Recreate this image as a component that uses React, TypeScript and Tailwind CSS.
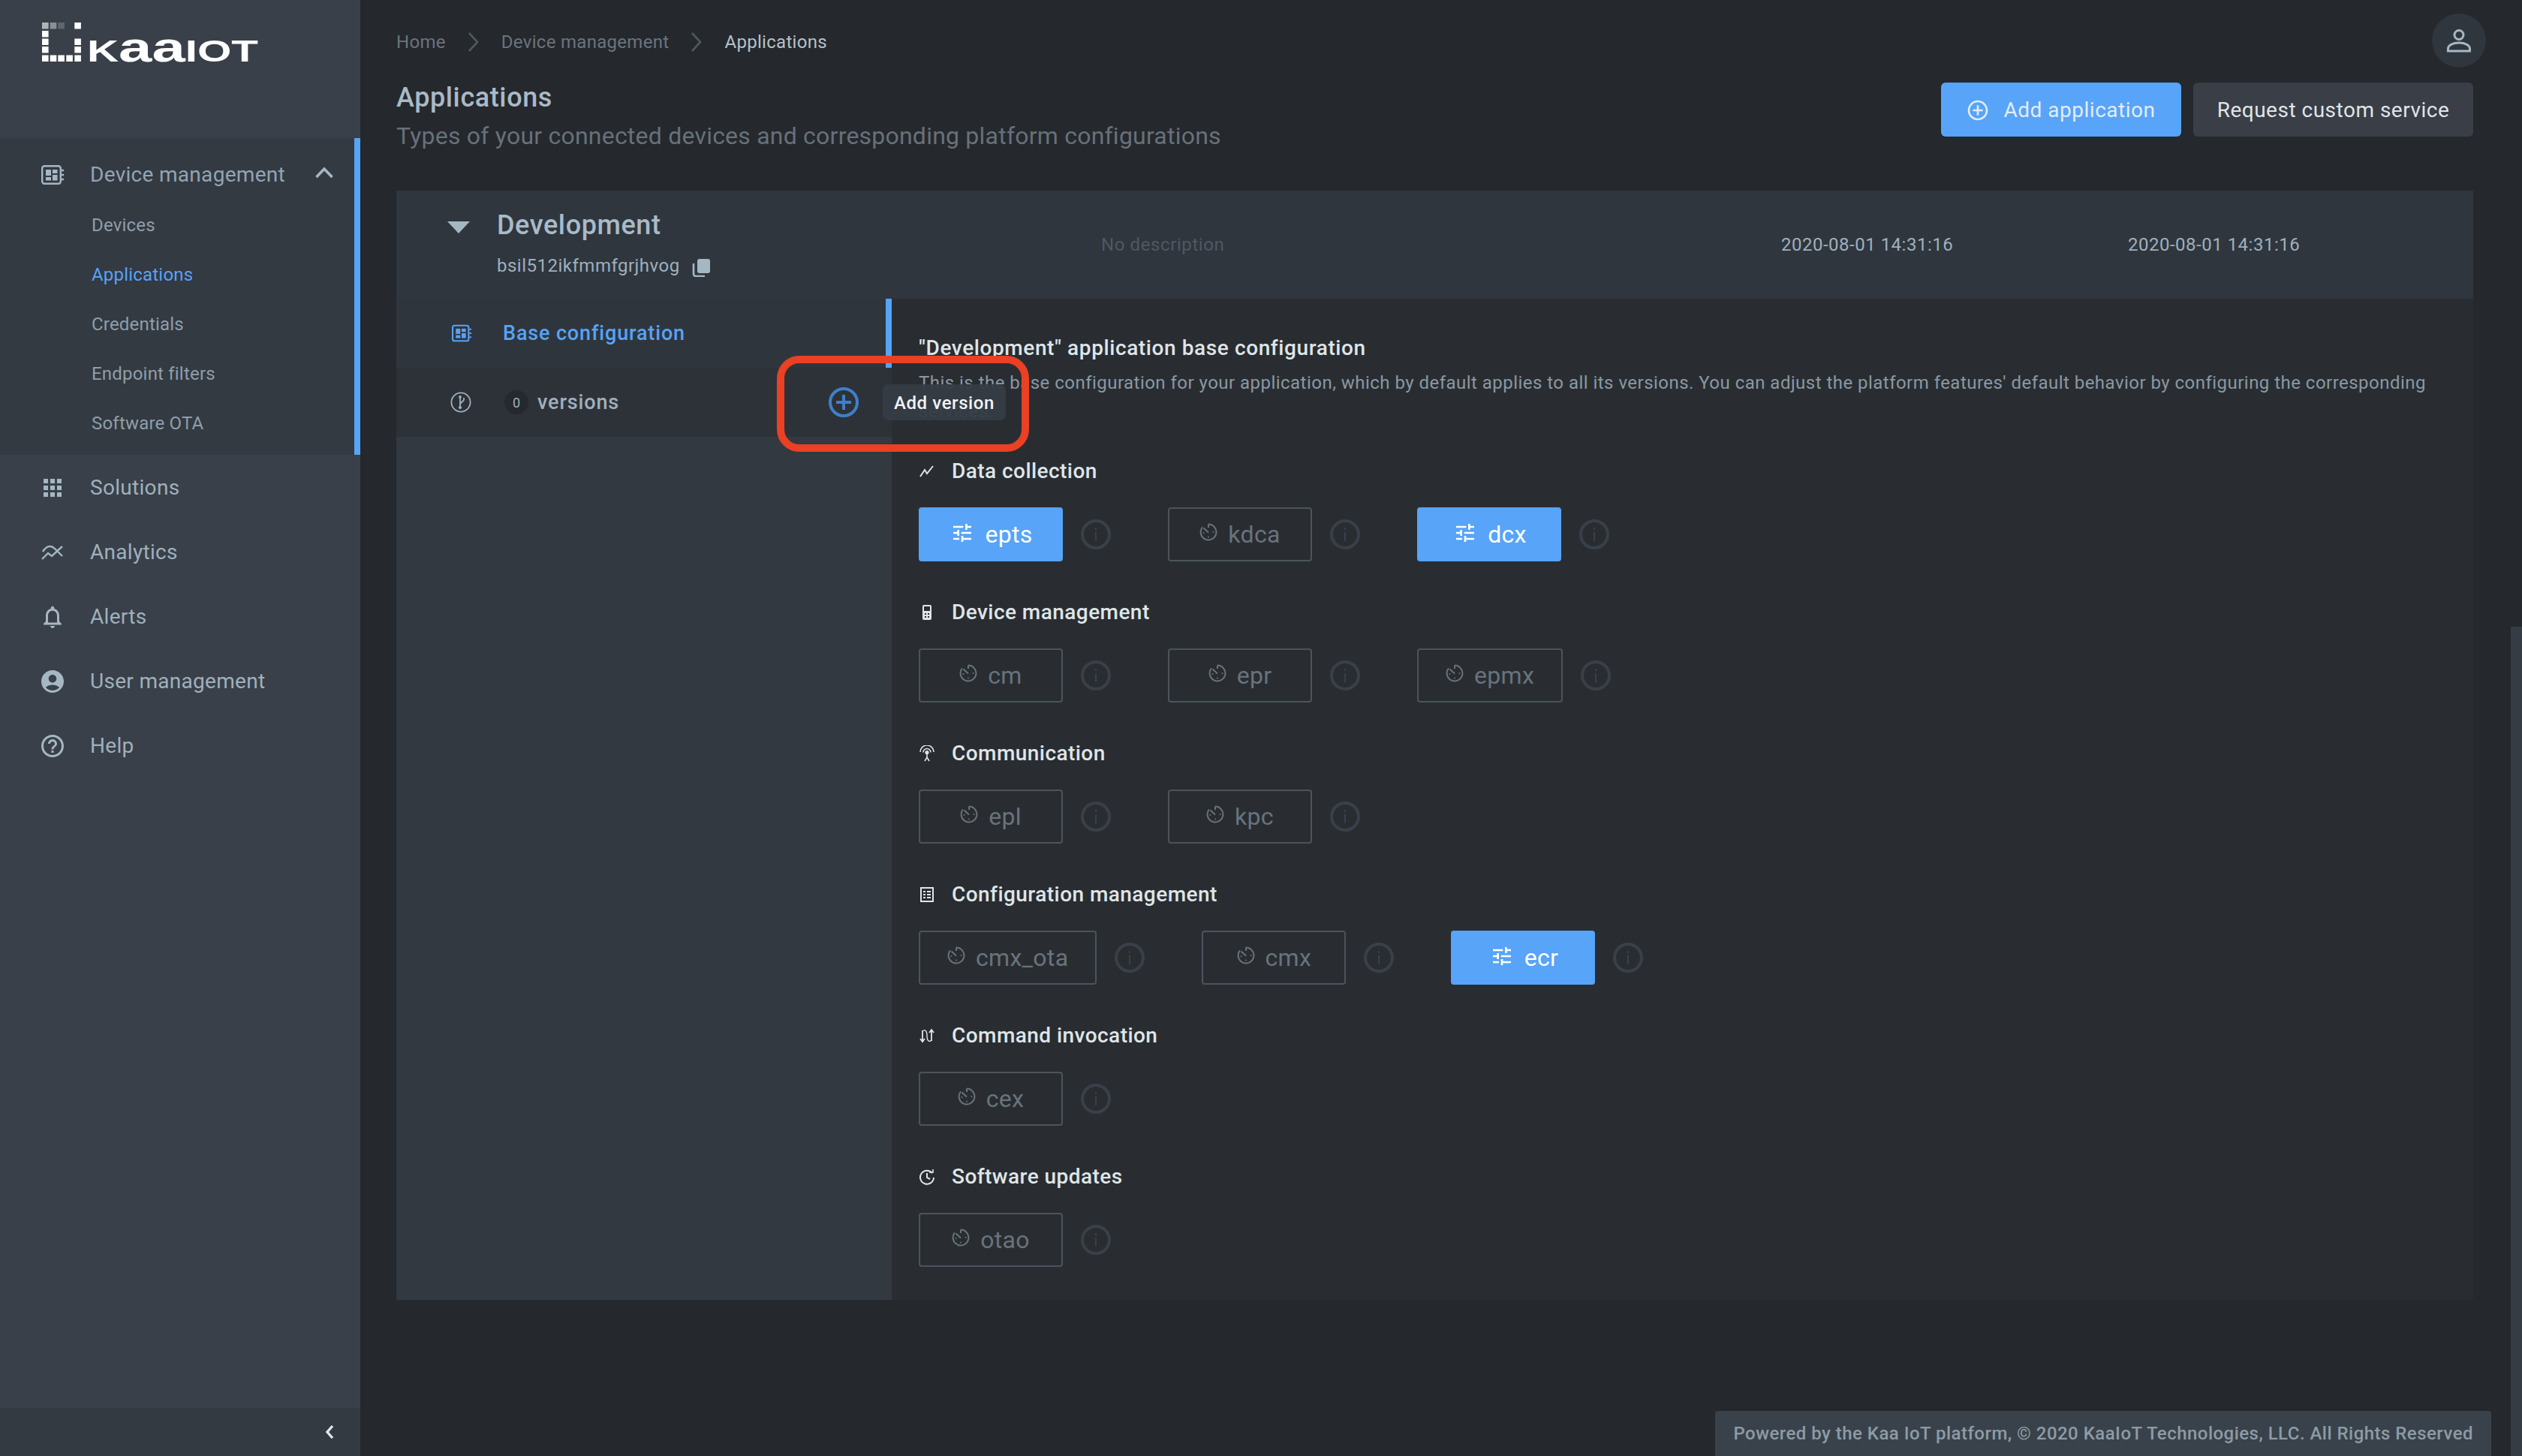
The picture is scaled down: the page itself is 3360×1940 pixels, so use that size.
import React from "react";
import { MdApps, MdNotificationsNone, MdAccountCircle, MdHelpOutline, MdTune, MdAddCircleOutline } from "react-icons/md";

const DeviceIcon = ({ w, h, c }: { w: number; h: number; c: string }) => (
  <svg width={w} height={h} viewBox="0 0 30 26" fill="none">
    <rect x="1.2" y="1.2" width="24.6" height="23.6" rx="3" stroke={c} strokeWidth="2.4" />
    <rect x="6" y="6" width="7" height="8" fill={c} />
    <rect x="15" y="6" width="6.5" height="5" fill={c} />
    <rect x="6" y="16" width="7" height="4.5" fill={c} />
    <rect x="15" y="13" width="6.5" height="7.5" fill={c} />
    <path d="M27 7h3M27 13h3M27 19h3" stroke={c} strokeWidth="2.4" />
  </svg>
);

const AnalyticsIcon = () => (
  <svg width="30" height="20" viewBox="0 0 30 20" fill="none" stroke="#a6b7c4" strokeWidth="2.4">
    <path d="M1 19 L9 11 L14 15 L28 2" />
    <path d="M2 9 C7 1 13 0 18 5 L28 15" />
  </svg>
);

const Logo = () => {
  const r = [56, 66.7, 77.3, 88.3, 99.3];
  const y = [30, 41, 51.5, 62, 73.5];
  return (
    <svg width="300" height="70" viewBox="56 30 300 70" className="ml-[56px] mt-[30px]">
      <rect x={r[0]} y={y[0]} width="8.6" height="8.5" fill="#b0b4b8" />
      <rect x={r[1]} y={y[0]} width="8.6" height="8.5" fill="#8a8f94" />
      <rect x={r[2]} y={y[0]} width="8.6" height="8.5" fill="#5f666e" />
      <rect x={r[4]} y={y[0]} width="8.6" height="8.5" fill="#fff" />
      {y.slice(1).map((v) => <rect key={v} x={r[0]} y={v} width="8.6" height="8.5" fill="#fff" />)}
      {r.slice(1).map((v) => <rect key={v} x={v} y={y[4]} width="8.6" height="8.5" fill="#fff" />)}
      {y.slice(2, 4).map((v) => <rect key={v} x={r[4]} y={v} width="8.6" height="8.5" fill="#fff" />)}
      <text x="116" y="82" fontSize="41" fontWeight="700" fill="#fff" textLength="228" lengthAdjust="spacingAndGlyphs" style={{ fontFamily: "Liberation Sans, sans-serif" }}>
        K<tspan fontSize="56">aa</tspan>IOT
      </text>
    </svg>
  );
};

const Dial = () => (
  <svg width="24" height="24" viewBox="0 0 24 24" fill="none" stroke="currentColor" strokeWidth="2" className="-mt-[6px] shrink-0">
    <path d="M12 1.6a10.4 10.4 0 1 1-8 3.8" />
    <path d="M12 1.600V6M5.500 6.500l6.500 6" />
    <circle cx="12" cy="18.500" r="1" fill="currentColor" stroke="none" />
    <circle cx="18.500" cy="12" r="1" fill="currentColor" stroke="none" />
    <circle cx="5.500" cy="13" r="1" fill="currentColor" stroke="none" />
  </svg>
);

const Info = () => (
  <svg width="40" height="40" viewBox="0 0 40 40" fill="none" className="shrink-0">
    <circle cx="20" cy="20" r="18" stroke="#394049" strokeWidth="4" />
    <rect x="19" y="17" width="2" height="12" fill="#394049" />
    <rect x="19" y="11" width="2" height="3" fill="#394049" />
  </svg>
);

type Svc = { n: string; on?: boolean };

const Service = ({ n, on }: Svc) => (
  <div className="flex items-center gap-[24px]">
    <div
      className={
        on
          ? "flex h-[72px] min-w-[192px] items-center justify-center gap-[14px] rounded-[4px] border-2 border-[#57a4f8] bg-[#57a4f8] px-[35px] text-[#ffffff]"
          : "flex h-[72px] min-w-[192px] items-center justify-center gap-[14px] rounded-[4px] border-2 border-[#4b545d] px-[36px] text-[#68737d]"
      }
    >
      {on ? <MdTune size={32} className="-mt-[4px] ml-[2px] shrink-0" /> : <Dial />}
      <span className="text-[32px] leading-[36px] tracking-[0.3px]">{n}</span>
    </div>
    <Info />
  </div>
);

const HeadIcon = ({ k }: { k: string }) => {
  const p = { width: 22, height: 22, viewBox: "0 0 22 22", fill: "none", stroke: "#dfe5e8", strokeWidth: 2 };
  if (k === "data") return <svg {...p}><path d="M2 18 L8 9 L11 14 L19 4" /></svg>;
  if (k === "dev")
    return (
      <svg {...p}>
        <rect x="5" y="1" width="12" height="20" rx="2" fill="#dfe5e8" stroke="none" />
        <rect x="7" y="3" width="8" height="6" fill="#292d31" stroke="none" />
        <path d="M8 13h2M12 13h2M8 17h2M12 17h2" stroke="#292d31" />
      </svg>
    );
  if (k === "com")
    return (
      <svg {...p} strokeWidth="1.6">
        <path d="M2 9a9 9 0 0 1 18 0M6 9.5a5 5 0 0 1 10 0" />
        <circle cx="11" cy="9.5" r="1.8" fill="#dfe5e8" />
        <path d="M11 11v5M8 21l3-5 3 5" />
      </svg>
    );
  if (k === "cfg")
    return (
      <svg {...p}>
        <rect x="3" y="2" width="16" height="18" strokeWidth="2" />
        <path d="M6 7h3M11 7h5M6 11h3M11 11h5M6 15h3M11 15h5" strokeWidth="1.8" />
      </svg>
    );
  if (k === "cmd")
    return (
      <svg {...p} strokeWidth="1.8">
        <path d="M5 4v14M2 15l3 4 3-4M17 18V4M14 7l3-4 3 4" />
        <path d="M5 5c3-3 6-1 6 6s3 9 6 6" strokeWidth="1.4" />
      </svg>
    );
  return (
    <svg {...p}>
      <path d="M18 6a9 9 0 1 0 2 6" />
      <path d="M11 6v6l4 2" />
      <path d="M14 5h5V1" strokeWidth="1.6" />
    </svg>
  );
};

const sections: { k: string; t: string; s: Svc[] }[] = [
  { k: "data", t: "Data collection", s: [{ n: "epts", on: true }, { n: "kdca" }, { n: "dcx", on: true }] },
  { k: "dev", t: "Device management", s: [{ n: "cm" }, { n: "epr" }, { n: "epmx" }] },
  { k: "com", t: "Communication", s: [{ n: "epl" }, { n: "kpc" }] },
  { k: "cfg", t: "Configuration management", s: [{ n: "cmx_ota" }, { n: "cmx" }, { n: "ecr", on: true }] },
  { k: "cmd", t: "Command invocation", s: [{ n: "cex" }] },
  { k: "upd", t: "Software updates", s: [{ n: "otao" }] },
];

const Chev = () => (
  <svg width="16" height="28" viewBox="0 0 16 28" fill="none" stroke="#4f5861" strokeWidth="2.6" className="mx-[29px]">
    <path d="M2 2l11 12L2 26" />
  </svg>
);

const navItems: [React.ReactNode, string][] = [
  [<MdApps size={36} color="#a6b7c4" />, "Solutions"],
  [<AnalyticsIcon />, "Analytics"],
  [<MdNotificationsNone size={36} color="#a6b7c4" />, "Alerts"],
  [<MdAccountCircle size={36} color="#a6b7c4" />, "User management"],
  [<MdHelpOutline size={36} color="#a6b7c4" />, "Help"],
];

export default function App() {
  return (
    <div className="relative flex h-[1940px] w-[3360px] overflow-hidden bg-[#25282c] [font-family:Roboto,sans-serif]">
      <aside className="flex h-full w-[480px] shrink-0 flex-col bg-[#394049]">
        <div className="h-[184px] shrink-0">
          <Logo />
        </div>
        <div className="h-[422px] shrink-0 border-r-[8px] border-[#56a3f7] bg-[#333a42] pt-[15px]">
          <div className="flex h-[68px] items-center pl-[55px]">
            <DeviceIcon w={30} h={26} c="#a6b7c4" />
            <span className="ml-[35px] text-[28px] tracking-[0.3px] text-[#93a4b2]">Device management</span>
            <svg width="24" height="16" viewBox="0 0 24 16" fill="none" stroke="#a6b7c4" strokeWidth="3.6" className="-mt-[6px] ml-auto mr-[28px]">
              <path d="M1.5 14L12 3l10.5 11" />
            </svg>
          </div>
          {["Devices", "Applications", "Credentials", "Endpoint filters", "Software OTA"].map((t) => (
            <div
              key={t}
              className={
                t === "Applications"
                  ? "flex h-[66px] items-center pl-[122px] text-[24px] tracking-[0.2px] text-[#56a3f7]"
                  : "flex h-[66px] items-center pl-[122px] text-[24px] tracking-[0.2px] text-[#8f9eaa]"
              }
            >
              {t}
            </div>
          ))}
        </div>
        <div className="pt-px">
          {navItems.map(([ic, t]) => (
            <div key={t} className="flex h-[86px] items-center">
              <div className="flex w-[140px] shrink-0 justify-center">{ic}</div>
              <span className="-ml-[20px] text-[28px] tracking-[0.3px] text-[#9fb0bd]">{t}</span>
            </div>
          ))}
        </div>
        <div className="mt-auto flex h-[64px] items-center justify-end bg-[#343a42] pr-[35px]">
          <svg width="12" height="20" viewBox="0 0 12 20" fill="none" stroke="#dfe7ee" strokeWidth="3.4">
            <path d="M10 2L3 10l7 8" />
          </svg>
        </div>
      </aside>

      <main className="flex h-full flex-1 flex-col pl-[48px]">
        <div className="flex h-[110px] shrink-0 items-start justify-between pr-[48px] pt-[18px]">
          <div className="flex h-[76px] items-center text-[24px] tracking-[0.3px] text-[#6a747e]">
            <span>Home</span>
            <Chev />
            <span>Device management</span>
            <Chev />
            <span className="text-[#b5c1cb]">Applications</span>
          </div>
          <div className="flex h-[72px] w-[72px] items-center justify-center rounded-full bg-[#2f363e]">
            <svg width="32" height="32" viewBox="0 0 32 32" fill="none" stroke="#a6b7c4" strokeWidth="3">
              <circle cx="16" cy="8.5" r="6" />
              <path d="M1.5 30v-3c0-5 7-8 14.500-8s14.500 3 14.500 8v3z" />
            </svg>
          </div>
        </div>

        <div className="flex h-[144px] w-[2767px] shrink-0 items-start justify-between">
          <div>
            <h1 className="text-[36px] font-medium leading-[40px] tracking-[0.6px] text-[#a9bac7]">Applications</h1>
            <p className="mt-[10px] text-[32px] leading-[42px] tracking-[0.22px] text-[#66717b]">
              Types of your connected devices and corresponding platform configurations
            </p>
          </div>
          <div className="flex gap-[16px]">
            <div className="flex h-[72px] w-[320px] items-center justify-center gap-[19px] rounded-[6px] bg-[#57a4f8] pt-[1px] text-[#e3ecf3]">
              <MdAddCircleOutline size={32} className="-ml-[2px]" />
              <span className="text-[28px] tracking-[0.5px]">Add application</span>
            </div>
            <div className="flex h-[72px] w-[373px] items-center justify-center rounded-[6px] bg-[#3a3e47] pt-[1px] text-[#dfe5e8]">
              <span className="text-[28px] tracking-[0.5px]">Request custom service</span>
            </div>
          </div>
        </div>

        <div className="flex w-[2767px] shrink-0 flex-col">
          <div className="grid h-[144px] grid-cols-[939px_906px_462px_460px] items-center bg-[#2f363e]">
            <div className="flex items-start pl-[68px]">
              <svg width="30" height="16" viewBox="0 0 30 16" className="mt-[13px]">
                <path d="M0 0h30L15 16z" fill="#a6b7c4" />
              </svg>
              <div className="-mt-[4px] ml-[36px]">
                <div className="text-[36px] font-medium leading-[44px] tracking-[0.6px] text-[#a9bac7]">Development</div>
                <div className="mt-[16px] flex items-center">
                  <span className="text-[24px] leading-[32px] tracking-[0.5px] text-[#9fb0bd]">bsil512ikfmmfgrjhvog</span>
                  <svg width="24" height="24" viewBox="0 0 24 24" className="ml-[16px] mt-[5px]">
                    <rect x="7" y="0" width="17" height="19" rx="3" fill="#a6b7c4" />
                    <path d="M2 6v14a3 3 0 0 0 3 3h12" fill="none" stroke="#a6b7c4" strokeWidth="2.6" />
                  </svg>
                </div>
              </div>
            </div>
            <div className="text-[24px] tracking-[0.6px] text-[#4f5861]">No description</div>
            <div className="text-[24px] tracking-[0.5px] text-[#9fb0bd]">2020-08-01 14:31:16</div>
            <div className="text-[24px] tracking-[0.5px] text-[#9fb0bd]">2020-08-01 14:31:16</div>
          </div>

          <div className="flex h-[1334px]">
            <div className="w-[660px] shrink-0 bg-[#323941]">
              <div className="flex h-[92px] items-center border-r-[8px] border-[#56a3f7] bg-[#2f353d] pl-[74px]">
                <DeviceIcon w={26} h={24} c="#56a3f7" />
                <span className="ml-[42px] text-[27px] font-medium tracking-[0.85px] text-[#56a3f7]">Base configuration</span>
              </div>
              <div className="flex h-[92px] items-center bg-[#2d3239] pl-[72px] pr-[44px]">
                <svg width="28" height="28" viewBox="0 0 28 28" fill="none" stroke="#9fb0bd" strokeWidth="1.8">
                  <circle cx="14" cy="14" r="12.600" />
                  <path d="M13 21V7M13 16l5-5M18 8v3" />
                  <circle cx="13" cy="21" r="1.200" fill="#9fb0bd" />
                  <circle cx="13" cy="7" r="1" fill="#9fb0bd" />
                </svg>
                <div className="ml-[44px] flex h-[32px] w-[32px] items-center justify-center rounded-full bg-[#25282c] text-[18px] text-[#9fb0bd]">0</div>
                <span className="ml-[12px] text-[27px] font-medium tracking-[0.85px] text-[#9fb0bd]">versions</span>
                <svg width="40" height="40" viewBox="0 0 40 40" fill="none" stroke="#3f80c8" strokeWidth="4" className="ml-auto">
                  <circle cx="20" cy="20" r="18" />
                  <path d="M10 20h20M20 10v20" />
                </svg>
              </div>
            </div>
            <div className="flex-1 bg-[#292d31] pl-[36px] pr-[36px] pt-[47px]">
              <div className="pt-[1px] text-[28px] font-medium leading-[36px] tracking-[0.6px] text-[#dfe5e8]">
                "Development" application base configuration
              </div>
              <p className="mt-[9px] text-[24px] leading-[38px] tracking-[0.47px] text-[#8a98a4]">
                This is the base configuration for your application, which by default applies to all its versions. You can adjust the platform features' default behavior by configuring the corresponding services.
              </p>
              <div className="mt-[41px]">
                {sections.map((s) => (
                  <section key={s.t} className="h-[188px]">
                    <div className="flex h-[40px] items-center">
                      <HeadIcon k={s.k} />
                      <span className="ml-[22px] text-[28px] font-medium tracking-[0.45px] text-[#dfe5e8]">{s.t}</span>
                    </div>
                    <div className="mt-[28px] flex gap-[76px]">
                      {s.s.map((v) => (
                        <Service key={v.n} {...v} />
                      ))}
                    </div>
                  </section>
                ))}
              </div>
            </div>
          </div>
        </div>

        <div className="mr-[41px] mt-auto flex h-[60px] items-center self-end rounded-t-[4px] bg-[#39424a] px-[24px] text-[24px] font-medium tracking-[0.47px] text-[#8d9ba6]">
          Powered by the Kaa IoT platform, © 2020 KaaIoT Technologies, LLC. All Rights Reserved
        </div>
      </main>

      <div className="absolute right-0 top-[835px] h-[1105px] w-[15px] bg-[#353c44]" />

      <div className="absolute left-[1176px] top-[512px] flex h-[48px] w-[164px] items-center justify-center rounded-[8px] bg-[#353c44]/95 pt-[2px] text-[24px] font-medium tracking-[0.6px] text-[#f1f3f5]">
        Add version
      </div>
      <div className="pointer-events-none absolute left-[1035px] top-[474px] h-[128px] w-[336px] rounded-[30px] border-[10px] border-[#ea4024]" />
    </div>
  );
}
